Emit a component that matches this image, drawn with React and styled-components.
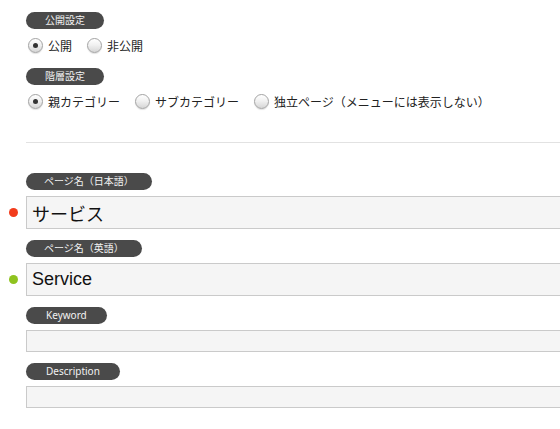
import styled, { createGlobalStyle } from 'styled-components';

const GlobalStyle = createGlobalStyle`
  html, body {
    margin: 0;
    padding: 0;
    background: #fff;
    overflow: hidden;
  }
  body {
    font-family: 'Noto Sans', 'Noto Sans CJK JP', sans-serif;
    color: #222;
  }
`;

const Page = styled.div`
  padding: 12px 0 20px 26px;
  width: 560px;
  box-sizing: border-box;
`;

const Pill = styled.div`
  display: inline-block;
  height: 17px;
  line-height: 17px;
  padding: 0 ${(p) => p.$pad || 19}px;
  box-sizing: border-box;
  text-align: center;
  background: #4a4a4a;
  color: #f2f2f2;
  border-radius: 9px;
  font-size: 10px;
  font-family: 'Noto Sans', 'Noto Sans CJK JP', sans-serif;
`;

const Group = styled.div`
  display: flex;
  flex-direction: column;
  align-items: flex-start;
  gap: ${(p) => (p.$radio ? 7 : 6)}px;
  margin-bottom: ${(p) => p.$after ?? 11}px;
`;

const RadioRow = styled.div`
  display: flex;
  align-items: center;
  height: 18px;
  gap: 13px;
`;

const RadioLabel = styled.label`
  display: flex;
  align-items: center;
  gap: 5px;
  font-size: 12px;
  color: #222;
  font-family: 'Noto Sans CJK JP', sans-serif;
`;

const RadioMark = styled.span`
  position: relative;
  width: 13px;
  height: 13px;
  margin-left: 2px;
  border-radius: 50%;
  border: 1px solid #a3a3a3;
  background: linear-gradient(180deg, #ffffff 0%, #f1f1f1 45%, #d6d6d6 100%);
  box-shadow: 0 1px 1px rgba(0, 0, 0, 0.12);
  &::after {
    content: '';
    display: ${(p) => (p.$checked ? 'block' : 'none')};
    position: absolute;
    left: 4px;
    top: 4px;
    width: 5px;
    height: 5px;
    border-radius: 50%;
    background: #333;
  }
`;

const Divider = styled.hr`
  border: 0;
  border-top: 1px solid #e2e2e2;
  margin: 32px 0 30px;
`;

const FieldRow = styled.div`
  display: flex;
  align-items: center;
  align-self: stretch;
  margin-left: -26px;
`;

const Gutter = styled.div`
  width: 26px;
  display: flex;
  justify-content: center;
`;

const Dot = styled.span`
  width: 9px;
  height: 9px;
  border-radius: 50%;
  background: ${(p) => p.$color};
`;

const TextBox = styled.div`
  flex: 1;
  height: ${(p) => (p.$big ? 33 : 22)}px;
  margin-right: -4px;
  box-sizing: border-box;
  border: 1px solid #cacaca;
  background: #f5f5f5;
  padding-left: 5px;
  display: flex;
  align-items: center;
  font-size: 18px;
  color: #111;
  font-family: 'Liberation Sans', 'Noto Sans CJK JP', sans-serif;
`;

function Radio({ checked, children }) {
  return (
    <RadioLabel>
      <RadioMark $checked={checked} />
      {children}
    </RadioLabel>
  );
}

function Field({ label, pad, value, dot, big }) {
  return (
    <Group>
      <Pill $pad={pad}>{label}</Pill>
      <FieldRow>
        <Gutter>{dot && <Dot $color={dot} />}</Gutter>
        <TextBox $big={big}>{value}</TextBox>
      </FieldRow>
    </Group>
  );
}

export default function App() {
  return (
    <>
      <GlobalStyle />
      <Page>
        <Group $radio $after={14}>
          <Pill>公開設定</Pill>
          <RadioRow>
            <Radio checked>公開</Radio>
            <Radio>非公開</Radio>
          </RadioRow>
        </Group>
        <Group $radio $after={0}>
          <Pill>階層設定</Pill>
          <RadioRow>
            <Radio checked>親カテゴリー</Radio>
            <Radio>サブカテゴリー</Radio>
            <Radio>独立ページ（メニューには表示しない）</Radio>
          </RadioRow>
        </Group>
        <Divider />
        <Field label="ページ名（日本語）" pad={18} value="サービス" dot="#f23c1c" big />
        <Field label="ページ名（英語）" pad={18} value="Service" dot="#8fc31f" big />
        <Field label="Keyword" pad={20} />
        <Field label="Description" pad={20} />
      </Page>
    </>
  );
}
